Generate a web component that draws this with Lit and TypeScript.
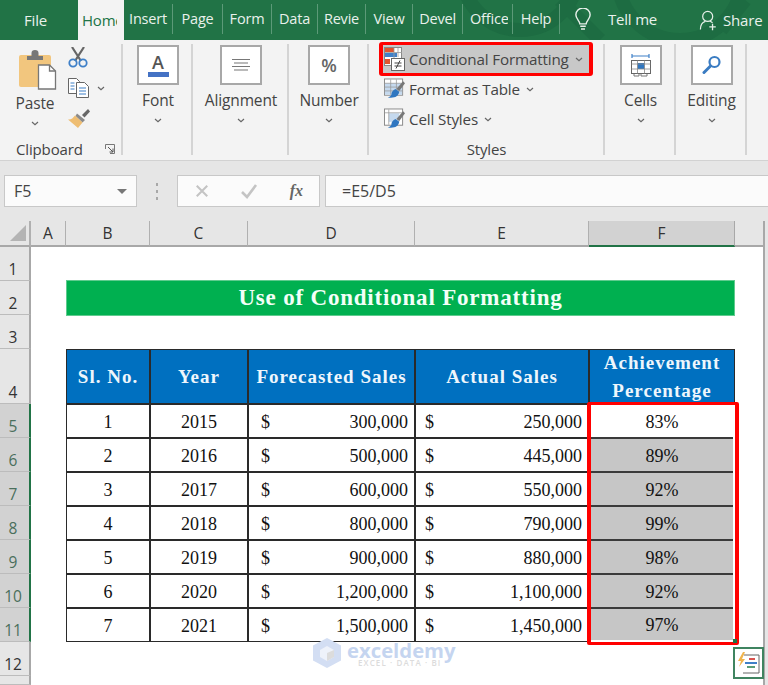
import { LitElement, html, css, svg } from "lit";
import { customElement } from "lit/decorators.js";

const chev = html`<svg class="chev" width="8" height="5" viewBox="0 0 8 5"><path d="M1 1l3 2.6L7 1" fill="none" stroke="#666" stroke-width="1.2"/></svg>`;

const tabs = [
  ["Insert", 49], ["Page", 50], ["Form", 49], ["Data", 46], ["Revie", 48], ["View", 47], ["Devel", 50], ["Office", 50], ["Help", 47],
] as const;

const paste = html`<svg width="38" height="40" viewBox="0 0 38 40">
  <rect x="0" y="5" width="32" height="32" rx="2" fill="#f2c67e"/>
  <path d="M8 10V6h4.500V3a3.500 3 0 0 1 7 0v3H24v4z" fill="#777"/>
  <path d="M19.500 15h11l6 6v18h-17z" fill="#fff" stroke="#777" stroke-width="1.300"/>
  <path d="M30.500 15v6h6" fill="none" stroke="#777" stroke-width="1.300"/>
</svg>`;
const scissors = html`<svg width="20" height="21" viewBox="0 0 20 21">
  <path d="M4 0l9 14M16 0L7 14" stroke="#666" stroke-width="2.200" fill="none"/>
  <circle cx="5" cy="16" r="3.700" fill="none" stroke="#3f80c8" stroke-width="1.800"/>
  <circle cx="15" cy="16" r="3.700" fill="none" stroke="#3f80c8" stroke-width="1.800"/>
</svg>`;
const copy = html`<svg width="21" height="20" viewBox="0 0 21 20">
  <path d="M.5.5h8l3 3v12H.5z" fill="#fff" stroke="#666"/>
  <path d="M8.500 4.500h8l4 4v11h-12z" fill="#fff" stroke="#666"/>
  <path d="M2.500 5h4M2.500 8h4M2.500 11h4M11 10h7M11 13h7M11 16h7" stroke="#3f80c8" stroke-width="1.200"/>
</svg>`;
const brush = html`<svg width="22" height="20" viewBox="0 0 22 20">
  <path d="M14 7l6-6 2 2.500-5.500 6z" fill="#666"/>
  <path d="M9 5.500l8 6.500-2.500 2.500-7-6.500z" fill="#8a8a8a"/>
  <path d="M7 7.500l7.500 7L10 20 0 11.500c3 .5 5-1.500 7-4z" fill="#eebd72"/>
</svg>`;
const alignIcon = html`<svg width="20" height="14" viewBox="0 0 20 14"><path d="M1 1.500h18M3 5h14M1 8.500h18M3 12h14" stroke="#777" stroke-width="1.200"/></svg>`;
const cfIcon = html`<svg width="21" height="24" viewBox="0 0 21 24">
  <rect x=".5" y=".5" width="17" height="18" fill="#fff" stroke="#888"/>
  <rect x="1" y="1" width="9" height="4" fill="#e0552f"/>
  <rect x="1" y="6" width="12" height="4" fill="#3f80c8"/>
  <rect x="1" y="12" width="5" height="5" fill="#e0552f"/>
  <path d="M10 1v17M14 1v9M1 5.500h17" stroke="#999" stroke-width=".8"/>
  <rect x="7.500" y="11.500" width="13" height="12" fill="#fff" stroke="#666"/>
  <path d="M10.500 16h7M10.500 19h7M12 21.500l4-8" stroke="#444" stroke-width="1"/>
</svg>`;
const tableIcon = html`<svg width="22" height="22" viewBox="0 0 22 22">
  <rect x=".5" y=".5" width="19" height="17" fill="#fff" stroke="#888"/>
  <rect x="1" y="5" width="18" height="12" fill="#c5d9ee"/>
  <path d="M7 1v16M13 1v16M1 5h18M1 9h18M1 13h18" stroke="#999" stroke-width=".8"/>
  <path d="M13 11l7-8 2 2-6 8z" fill="#777"/>
  <path d="M12 11l4 3c-1 5-5 7-12 6 3-1 4-2 4-5 1-2 2-3 4-4z" fill="#2f76c0"/>
</svg>`;
const styleIcon = html`<svg width="22" height="22" viewBox="0 0 22 22">
  <rect x=".5" y=".5" width="19" height="17" fill="#fff" stroke="#888"/>
  <rect x="5" y="5" width="11" height="9" fill="#c5d9ee"/>
  <path d="M1 4.500h18M5 1v16" stroke="#999" stroke-width=".8"/>
  <path d="M13 11l7-8 2 2-6 8z" fill="#777"/>
  <path d="M12 11l4 3c-1 5-5 7-12 6 3-1 4-2 4-5 1-2 2-3 4-4z" fill="#2f76c0"/>
</svg>`;
const cellsIcon = html`<svg width="22" height="24" viewBox="0 0 22 24">
  <path d="M2 3h17M2 1v4M19 1v4" stroke="#3f80c8" stroke-width="1.200" fill="none"/>
  <rect x="1.500" y="7.500" width="19" height="13" fill="#fff" stroke="#666"/>
  <rect x="7.500" y="10" width="7" height="6" fill="#2f76c0"/>
  <path d="M1.500 11h19M1.500 16h19M7.500 7.500v13M14.500 7.500v13" stroke="#888" stroke-width=".8"/>
  <path d="M4 21v2h5v-2M11 21v2h6v-2" stroke="#777" fill="none"/>
</svg>`;
const findIcon = html`<svg width="20" height="20" viewBox="0 0 20 20">
  <circle cx="12.500" cy="7" r="5" fill="#fff" stroke="#3a7cc2" stroke-width="2.200"/>
  <path d="M8.500 11L2 17.500" stroke="#3a7cc2" stroke-width="3" stroke-linecap="round"/>
</svg>`;
const launcher = html`<svg width="10" height="10" viewBox="0 0 10 10"><path d="M.5 5V.5H9.500V9.500H5" fill="none" stroke="#777"/><path d="M3 3l5 5M8 4.500V8H4.500" fill="none" stroke="#555"/></svg>`;
const bulb = html`<svg width="16" height="23" viewBox="0 0 20 29">
  <path d="M6 20c0-4-5-6-5-11.500a9 8.500 0 0 1 18 0C19 14 14 16 14 20z" fill="none" stroke="#e6efe9" stroke-width="1.800"/>
  <path d="M6.500 23h7M7.500 26.500h5" stroke="#e6efe9" stroke-width="1.800"/>
</svg>`;
const person = html`<svg width="19" height="21" viewBox="0 0 22 26">
  <circle cx="10" cy="8" r="6.200" fill="none" stroke="#e6efe9" stroke-width="1.500"/>
  <path d="M1 24c0-6 3-9 6-10M13 14c1 .5 2 1 3 2" fill="none" stroke="#e6efe9" stroke-width="1.500"/>
  <path d="M16 17v8M12 21h8" stroke="#e6efe9" stroke-width="1.600"/>
</svg>`;
const pattern = svg`<g fill="none" stroke="#1d6c42" stroke-width="14">
  <circle cx="520" cy="-28" r="58"/><circle cx="680" cy="-22" r="62"/><path d="M560 0l40 40M745 0l-24 30"/></g>`;

const rows = [
  ["1", "2015", "300,000", "250,000", "83%"],
  ["2", "2016", "500,000", "445,000", "89%"],
  ["3", "2017", "600,000", "550,000", "92%"],
  ["4", "2018", "800,000", "790,000", "99%"],
  ["5", "2019", "900,000", "880,000", "98%"],
  ["6", "2020", "1,200,000", "1,100,000", "92%"],
  ["7", "2021", "1,500,000", "1,450,000", "97%"],
];

@customElement("app-root")
export class AppRoot extends LitElement {
  static styles = css`
    :host { display: block; width: 768px; height: 685px; overflow: hidden; background: #e6e6e6; font-family: "Open Sans", "Noto Sans", sans-serif; color: #444; }
    .app { display: flex; flex-direction: column; height: 685px; }
    svg { display: block; flex: none; }

    .tabs { position: relative; height: 40px; background: #217346; display: flex; flex: none; color: #e9f1ec; font-size: 14.500px; letter-spacing: -.2px; }
    .pattern { position: absolute; inset: 0; }
    .tab { position: relative; box-sizing: border-box; display: flex; align-items: center; justify-content: center; height: 40px; overflow: hidden; white-space: nowrap; }
    .file { width: 78px; padding-right: 7px; font-size: 15px; }
    .home { width: 46px; background: #f3f3f3; color: #217346; justify-content: flex-start; padding-left: 4px; font-size: 15px; }
    .home span { display: block; width: 35px; overflow: hidden; }
    .sep { border-right: 1px solid #5c9a78; height: 30px; margin-top: 4px; padding-bottom: 2px; padding-top: 0; }
    .office { justify-content: flex-start; padding-left: 7px; }
    .office span { display: block; width: 38px; overflow: hidden; }
    .bulb { position: relative; margin-left: 15px; padding-top: 8px; }
    .tell { position: relative; margin-left: 17px; line-height: 38px; font-size: 15px; }
    .person { position: relative; margin-left: 42px; padding-top: 10px; }
    .share { position: relative; margin-left: 5px; line-height: 40px; font-size: 15px; }

    .ribbon { flex: none; height: 120px; box-sizing: content-box; background: #f3f3f3; border-bottom: 1px solid #d2d2d2; display: flex; padding: 0; font-size: 15.500px; letter-spacing: -.15px; color: #444; }
    .group { box-sizing: border-box; height: 111px; margin-top: 4px; border-right: 2px solid #d4d4d4; display: flex; flex-direction: column; align-items: center; padding: 1px 0 0 2px; }
    .box { box-sizing: border-box; flex: none; width: 42px; height: 40px; background: #fff; border: 2px solid #a8a8a8; display: flex; flex-direction: column; align-items: center; justify-content: center; }
    .big { line-height: 20px; margin-top: 5px; }
    .group > .chev { margin-top: 8px; }
    .glabel { line-height: 12px; height: 12px; margin-top: auto; font-size: 15px; }
    .a { font-weight: 600; font-size: 18px; line-height: 18px; color: #555; }
    .abar { width: 21px; height: 5px; background: #4472c4; margin-top: 1px; }
    .pct { font-weight: 600; font-size: 18px; color: #666; }

    .clip { width: 123px; align-items: stretch; padding: 0; }
    .clipmain { display: flex; }
    .pastecol { width: 40px; margin-left: 15px; display: flex; flex-direction: column; align-items: center; padding-top: 6px; }
    .pastecol svg:first-child { margin-left: 5px; }
    .pastecol span { line-height: 20px; margin-top: 3px; }
    .pastecol .chev { margin-top: 8px; }
    .smallcol { margin-left: 13px; padding-top: 3px; display: flex; flex-direction: column; gap: 10px; }
    .copyrow { display: flex; align-items: center; gap: 8px; }
    .cliplabel { display: flex; justify-content: space-between; align-items: center; padding: 0 6px 0 16px; line-height: 12px; height: 12px; margin-top: auto; font-size: 15px; }

    .styles { width: 236px; align-items: stretch; padding: 0 0 0 10px; font-size: 15.200px; }
    .cf { box-sizing: border-box; flex: none; width: 214px; height: 34px; margin-top: -2px; border-style: solid; border-color: #f00; border-width: 3px 4px; border-radius: 3px; background: #c8c8c8; display: flex; align-items: center; padding-left: 1px; }
    .srow { height: 30px; flex: none; display: flex; align-items: center; padding-left: 5px; }
    .cf + .srow { margin-top: -2px; }
    .cf svg:first-child, .srow svg:first-child { width: 21px; margin-right: 4px; }
    .cf .chev, .srow .chev { margin-left: 6px; }
    .styles .glabel { align-self: center; margin-right: 9px; }

    .fbar { flex: none; height: 60px; box-sizing: border-box; padding: 14px 0 14px 4px; display: flex; background: #e6e6e6; }
    .fbox { box-sizing: border-box; height: 32px; background: #fbfbfb; border: 1px solid #c8c8c8; display: flex; align-items: center; font-size: 16px; color: #444; }
    .name { width: 133px; padding: 0 9px 0 9px; justify-content: space-between; }
    .tri { width: 0; height: 0; border-left: 5px solid transparent; border-right: 5px solid transparent; border-top: 5px solid #777; }
    .dots { width: 40px; display: flex; flex-direction: column; align-items: center; justify-content: center; gap: 4px; }
    .dots i { display: block; width: 2px; height: 3px; background: #a8a8a8; }
    .fx { width: 143px; position: relative; justify-content: space-between; padding: 0 16px 0 17px; }
    .fxt { font-family: "Liberation Serif", serif; font-style: italic; font-weight: 700; color: #666; font-size: 16px; }
    .formula { flex: 1; margin-left: 5px; padding-left: 16px; border-right: 0; }

    .sheet { position: relative; box-sizing: border-box; width: 765px; flex: 1; background: #fff; display: grid; grid-template-columns: 31px 35px 84px 98px 167px 174px 146px 30px; grid-template-rows: 26px 34px 34px 34px 55px repeat(8, 34px) 1fr; font-family: "Liberation Serif", serif; font-size: 18px; color: #111; }
    .corner { background: #e6e6e6; border-right: 2px solid #b0b0b0; border-bottom: 2px solid #a8a8a8; box-sizing: border-box; display: flex; align-items: center; justify-content: flex-end; padding-right: 3px; }
    .ch { box-sizing: border-box; background: #e6e6e6; border-right: 1px solid #b0b0b0; border-bottom: 2px solid #a8a8a8; display: flex; align-items: center; justify-content: center; font-family: "Open Sans", sans-serif; font-size: 15.500px; color: #333; }
    .ch.on { background: #d2d2d2; border-bottom: 2px solid #217346; border-right: 1px solid #a8a8a8; }
    .ch.end { border-right: 2px solid #a8a8a8; }
    .rh { box-sizing: border-box; background: #e6e6e6; border-right: 2px solid #a8a8a8; border-bottom: 1px solid #bcbcbc; display: flex; align-items: flex-end; justify-content: center; font-family: "Open Sans", sans-serif; font-size: 15.500px; color: #333; line-height: 22px; padding-right: 3px; }
    .rh.on { background: #d2d2d2; border-right-color: #217346; color: #4a6f5c; }
    .blank { background: #fff; }
    .span7 { grid-column: span 7; border-right: 2px solid #a8a8a8; }
    .last { border-right: 2px solid #a8a8a8; }
    .title { grid-column: span 5; background: #00b050; border: 1px solid #5fcb8e; margin-top: -1px; margin-bottom: -1px; color: #f3fff8; font-weight: 700; font-size: 23px; letter-spacing: .8px; display: flex; align-items: center; justify-content: center; position: relative; }
    .th, .td { box-sizing: border-box; border: 1px solid #2a2a2a; display: flex; align-items: center; justify-content: center; }
    .th { background: #0070c0; color: #eef6fc; font-weight: 700; font-size: 19px; text-align: center; line-height: 28px; letter-spacing: 1px; padding-top: 1px; }
    .td { padding-top: 2px; }
    .td.money { justify-content: space-between; padding: 2px 6px 0 9px; }
    .td.d { padding-left: 12px; }
    .td.pc { border-width: 1px 0; margin: 0 2px; border-color: #3a3a3a; }
    .td.gray { background: #c6c6c6; }
    .td.end { margin-bottom: 2px; border-bottom: 0; }
    .redbox { position: absolute; grid-area: 6 / 7 / 13 / 8; inset: -2px -4px -3px -2px; border-style: solid; border-color: #f00; border-width: 3px 4px; border-radius: 2px; }
    .handle { position: absolute; right: -2px; bottom: -1px; width: 4px; height: 4px; background: #217346; }
    .qa { position: absolute; left: 733px; top: 426px; box-sizing: border-box; width: 31px; height: 32px; border: 2px solid #3f8460; background: #fff; display: flex; align-items: center; justify-content: center; }
    .mark { position: absolute; left: 313px; top: 417px; display: flex; gap: 6px; font-family: "Open Sans", sans-serif; }
    .mark b { display: block; color: #c5d5f0; font-size: 20.300px; line-height: 18px; font-weight: 700; margin-top: 3px; }
    .mark small { display: block; color: #dcdcdc; font-size: 8px; line-height: 6px; letter-spacing: 1.100px; font-weight: 600; margin-left: 11px; margin-top: 1px; }
  `;

  private rh(n: string, on = false) {
    return html`<div class="rh ${on ? "on" : ""}">${n}</div>`;
  }

  render() {
    return html`<div class="app">
      <div class="tabs">
        <svg class="pattern" width="768" height="40">${pattern}</svg>
        <div class="tab file">File</div>
        <div class="tab home"><span>Home</span></div>
        ${tabs.map(([t, w]) => t === "Office"
          ? html`<div class="tab sep office" style="width:${w}px"><span>${t}</span></div>`
          : html`<div class="tab sep" style="width:${w}px">${t}</div>`)}
        <div class="bulb">${bulb}</div>
        <div class="tell">Tell me</div>
        <div class="person">${person}</div>
        <div class="share">Share</div>
      </div>

      <div class="ribbon">
        <div class="group clip">
          <div class="clipmain">
            <div class="pastecol">${paste}<span>Paste</span>${chev}</div>
            <div class="smallcol">${scissors}<div class="copyrow">${copy}${chev}</div>${brush}</div>
          </div>
          <div class="cliplabel"><span>Clipboard</span>${launcher}</div>
        </div>
        <div class="group" style="width:70px">
          <div class="box"><span class="a">A</span><div class="abar"></div></div>
          <span class="big">Font</span>${chev}
        </div>
        <div class="group" style="width:96px">
          <div class="box">${alignIcon}</div>
          <span class="big">Alignment</span>${chev}
        </div>
        <div class="group" style="width:80px">
          <div class="box"><span class="pct">%</span></div>
          <span class="big">Number</span>${chev}
        </div>
        <div class="group styles">
          <div class="cf">${cfIcon}<span>Conditional Formatting</span>${chev}</div>
          <div class="srow">${tableIcon}<span>Format as Table</span>${chev}</div>
          <div class="srow">${styleIcon}<span>Cell Styles</span>${chev}</div>
          <span class="glabel">Styles</span>
        </div>
        <div class="group" style="width:71px">
          <div class="box">${cellsIcon}</div>
          <span class="big">Cells</span>${chev}
        </div>
        <div class="group" style="width:71px">
          <div class="box">${findIcon}</div>
          <span class="big">Editing</span>${chev}
        </div>
      </div>

      <div class="fbar">
        <div class="fbox name"><span>F5</span><i class="tri"></i></div>
        <div class="dots"><i></i><i></i><i></i></div>
        <div class="fbox fx">
          <svg width="14" height="14" viewBox="0 0 16 16"><path d="M2 2l12 12M14 2L2 14" stroke="#c4c4c4" stroke-width="2.400"/></svg>
          <svg width="18" height="16" viewBox="0 0 18 16"><path d="M2 9l5 5L16 2" fill="none" stroke="#c4c4c4" stroke-width="2.600"/></svg>
          <span class="fxt">fx</span>
        </div>
        <div class="fbox formula">=E5/D5</div>
      </div>

      <div class="sheet">
        <div class="corner"><svg width="16" height="16" viewBox="0 0 16 16"><path d="M16 0v16H0z" fill="#b4b4b4"/></svg></div>
        <div class="ch">A</div><div class="ch">B</div><div class="ch">C</div><div class="ch">D</div><div class="ch">E</div><div class="ch on">F</div><div class="ch end"></div>

        ${this.rh("1")}<div class="blank span7"></div>
        ${this.rh("2")}<div class="blank"></div><div class="title">Use of Conditional Formatting</div><div class="blank last"></div>
        ${this.rh("3")}<div class="blank span7"></div>
        ${this.rh("4")}<div class="blank"></div>
        <div class="th">Sl. No.</div><div class="th">Year</div><div class="th">Forecasted Sales</div><div class="th">Actual Sales</div><div class="th">Achievement<br />Percentage</div>
        <div class="blank last"></div>
        ${rows.map((r, i) => html`
          ${this.rh(String(i + 5), true)}<div class="blank"></div>
          <div class="td">${r[0]}</div><div class="td">${r[1]}</div>
          <div class="td money d"><span>$</span><span>${r[2]}</span></div>
          <div class="td money"><span>$</span><span>${r[3]}</span></div>
          <div class="td pc ${i > 0 ? "gray" : ""} ${i === 6 ? "end" : ""}">${r[4]}</div>
          <div class="blank last"></div>`)}
        ${this.rh("12")}<div class="blank span7"></div>
        ${this.rh("")}<div class="blank span7"></div>

        <div class="redbox"><div class="handle"></div></div>
        <div class="mark">
          <svg width="28" height="30" viewBox="0 0 28 30">
            <path d="M14 0l14 7.500v15L14 30 0 22.500v-15z" fill="#d3def3"/>
            <path d="M14 8l7 4v7l-7 4-7-4v-7z" fill="#eef2fa"/>
            <path d="M14 15l7-3v7l-7 4z" fill="#dcdcdc"/>
          </svg>
          <div><b>exceldemy</b><small>EXCEL · DATA · BI</small></div>
        </div>
        <div class="qa">
          <svg width="22" height="22" viewBox="0 0 22 22">
            <path d="M6 3h15v18H5" fill="#fff" stroke="#666"/>
            <path d="M5 0L0 9h3l-2 6 6-8H4l3-7z" fill="#f0b44c"/>
            <path d="M11 7h6" stroke="#d9534f" stroke-width="2"/>
            <path d="M7 11h12" stroke="#3f80c8" stroke-width="2"/>
            <path d="M9 15h8" stroke="#5b9e78" stroke-width="2"/>
          </svg>
        </div>
      </div>
    </div>`;
  }
}
